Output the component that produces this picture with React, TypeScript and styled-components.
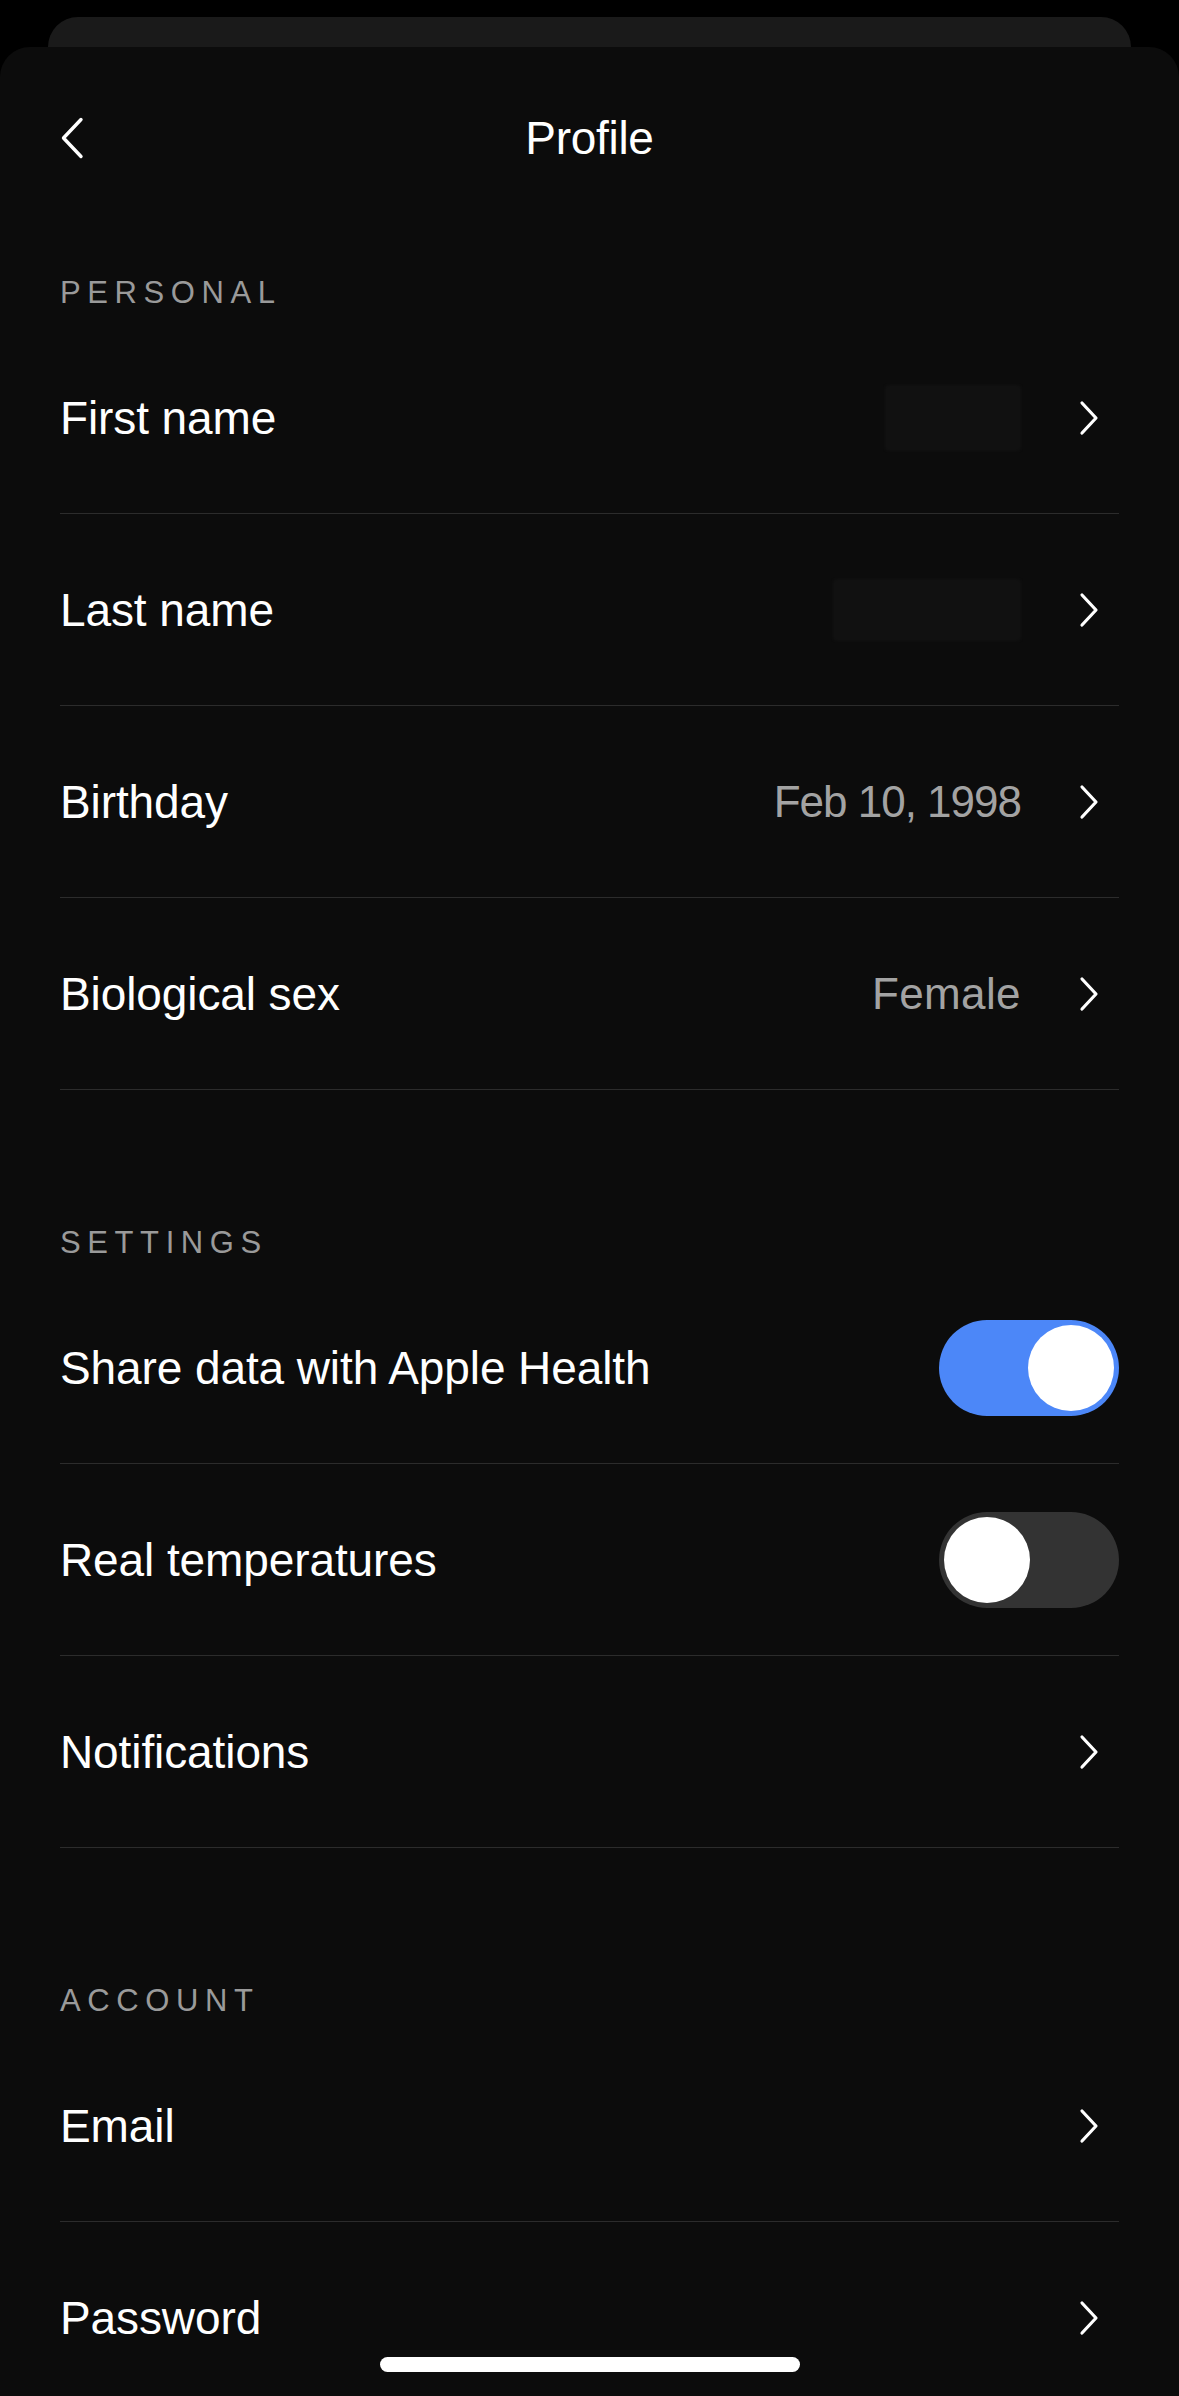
import React from "react";
import styled, { createGlobalStyle } from "styled-components";

const Global = createGlobalStyle`
  html, body {
    margin: 0;
    padding: 0;
    background: #000;
  }
  body {
    font-family: "Liberation Sans", Arial, sans-serif;
    color: #fff;
    -webkit-font-smoothing: antialiased;
  }
`;

const Screen = styled.div`
  width: 1179px;
  height: 2396px;
  overflow: hidden;
  background: #000;
  display: flex;
  flex-direction: column;
`;

const BackSheet = styled.div`
  margin: 17px 48px 0;
  height: 30px;
  background: #1a1a1a;
  border-radius: 32px 32px 0 0;
  flex-shrink: 0;
`;

const Sheet = styled.div`
  flex: 1;
  background: #0c0c0c;
  border-radius: 30px 30px 0 0;
  padding: 0 60px;
  display: flex;
  flex-direction: column;
`;

const Header = styled.header`
  height: 182px;
  display: grid;
  grid-template-columns: 80px 1fr 80px;
  align-items: center;
  flex-shrink: 0;
`;

const BackButton = styled.button`
  background: none;
  border: none;
  padding: 0;
  width: 24px;
  height: 42px;
  display: flex;
  align-items: center;
  justify-content: flex-start;
  cursor: pointer;
`;

const Title = styled.h1`
  margin: 0;
  text-align: center;
  font-size: 46px;
  font-weight: 400;
  letter-spacing: -0.3px;
  color: #fff;
`;

const Section = styled.section<{ $first?: boolean }>`
  display: flex;
  flex-direction: column;
  margin-top: ${(p) => (p.$first ? "46px" : "135px")};
`;

const SectionLabel = styled.div`
  height: 36px;
  line-height: 36px;
  font-size: 31px;
  letter-spacing: 6.6px;
  color: #9a9a9a;
  text-transform: uppercase;
  margin-bottom: 11px;
`;

const Row = styled.div`
  height: 191px;
  border-bottom: 1px solid #2c2c2c;
  display: flex;
  align-items: center;
  justify-content: space-between;
  flex-shrink: 0;
`;

const RowLabel = styled.span`
  font-size: 46px;
  color: #fff;
  letter-spacing: -0.1px;
`;

const Trailing = styled.div`
  display: flex;
  align-items: center;
`;

const Value = styled.span<{ $spacing: number }>`
  font-size: 44px;
  color: #a3a3a3;
  letter-spacing: ${(p) => p.$spacing}px;
`;

const Redacted = styled.span<{ $w: number; $h: number }>`
  display: block;
  width: ${(p) => p.$w}px;
  height: ${(p) => p.$h}px;
  background: #111111;
  border-radius: 4px;
  filter: blur(1px);
`;

const ChevronBox = styled.span`
  display: flex;
  width: 20px;
  height: 36px;
  margin-left: 58px;
  margin-right: 20px;
`;

const Switch = styled.div<{ $on: boolean }>`
  width: 180px;
  height: 96px;
  border-radius: 48px;
  background: ${(p) => (p.$on ? "#4c87f8" : "#333333")};
  display: flex;
  align-items: center;
  justify-content: ${(p) => (p.$on ? "flex-end" : "flex-start")};
  padding: 0 5px;
  box-sizing: border-box;
`;

const Knob = styled.div`
  width: 86px;
  height: 86px;
  border-radius: 50%;
  background: #fff;
`;

const HomeIndicator = styled.div`
  position: fixed;
  left: 380px;
  top: 2357px;
  width: 420px;
  height: 15px;
  border-radius: 8px;
  background: #fff;
`;

const Chevron = () => (
  <ChevronBox>
    <svg width="20" height="36" viewBox="0 0 20 36" fill="none">
      <path
        d="M3 3 L17 18 L3 33"
        stroke="#fff"
        strokeWidth="3.2"
        strokeLinecap="round"
        strokeLinejoin="round"
      />
    </svg>
  </ChevronBox>
);

type NavRowProps = {
  label: string;
  value?: string;
  spacing?: number;
  redact?: { w: number; h: number };
};

const NavRow = ({ label, value, spacing = 0, redact }: NavRowProps) => (
  <Row>
    <RowLabel>{label}</RowLabel>
    <Trailing>
      {value && <Value $spacing={spacing}>{value}</Value>}
      {redact && <Redacted $w={redact.w} $h={redact.h} />}
      <Chevron />
    </Trailing>
  </Row>
);

const ToggleRow = ({ label, on }: { label: string; on: boolean }) => (
  <Row>
    <RowLabel>{label}</RowLabel>
    <Switch $on={on}>
      <Knob />
    </Switch>
  </Row>
);

export default function App() {
  return (
    <>
      <Global />
      <Screen>
        <BackSheet />
        <Sheet>
          <Header>
            <BackButton aria-label="Back">
              <svg width="24" height="42" viewBox="0 0 24 42" fill="none">
                <path
                  d="M21 2.5 L3.5 21 L21 39.5"
                  stroke="#fff"
                  strokeWidth="3.4"
                  strokeLinecap="round"
                  strokeLinejoin="round"
                />
              </svg>
            </BackButton>
            <Title>Profile</Title>
            <span />
          </Header>

          <Section $first>
            <SectionLabel>Personal</SectionLabel>
            <NavRow label="First name" redact={{ w: 136, h: 66 }} />
            <NavRow label="Last name" redact={{ w: 188, h: 62 }} />
            <NavRow label="Birthday" value="Feb 10, 1998" spacing={-1} />
            <NavRow label="Biological sex" value="Female" spacing={0.4} />
          </Section>

          <Section>
            <SectionLabel>Settings</SectionLabel>
            <ToggleRow label="Share data with Apple Health" on />
            <ToggleRow label="Real temperatures" on={false} />
            <NavRow label="Notifications" />
          </Section>

          <Section>
            <SectionLabel>Account</SectionLabel>
            <NavRow label="Email" />
            <NavRow label="Password" />
          </Section>
        </Sheet>
        <HomeIndicator />
      </Screen>
    </>
  );
}
